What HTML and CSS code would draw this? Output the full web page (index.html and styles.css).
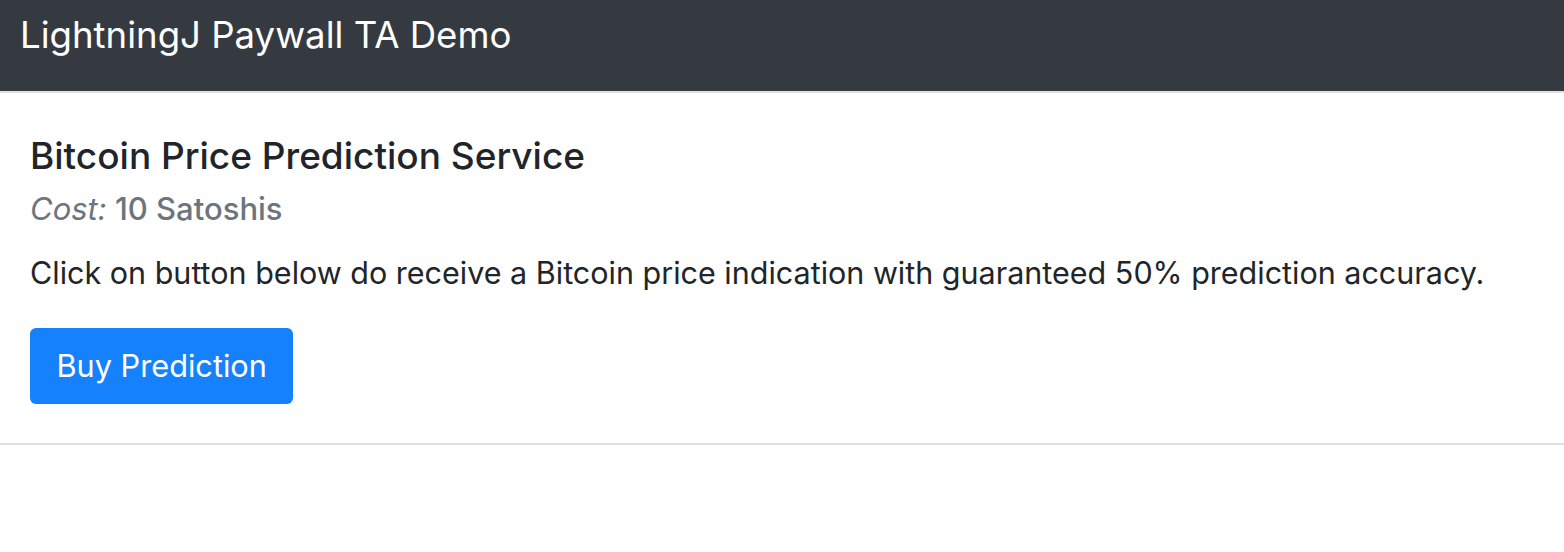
FILE: index.html
```html
<!DOCTYPE html>
<html lang="en">
<head>
<meta charset="utf-8">
<title>LightningJ Paywall TA Demo</title>
<link rel="stylesheet" href="styles.css">
</head>
<body>
<nav class="navbar">
  <span class="brand">LightningJ Paywall TA Demo</span>
</nav>
<div class="card">
  <div class="card-body">
    <h5 class="card-title">Bitcoin Price Prediction Service</h5>
    <h6 class="card-subtitle"><em>Cost:</em> 10 Satoshis</h6>
    <p class="card-text">Click on button below do receive a Bitcoin price indication with guaranteed 50% prediction accuracy.</p>
    <button class="btn">Buy Prediction</button>
  </div>
</div>
</body>
</html>
```

FILE: styles.css
```css
* { box-sizing: border-box; }
html, body { margin: 0; padding: 0; background: #fff; }
body {
  font-family: Inter, "Noto Sans", "Liberation Sans", sans-serif;
  color: #212529;
}
.navbar {
  background: #353a41;
  height: 91px;
  padding: 13px 20px 0;
}
.brand {
  display: block;
  color: #fff;
  font-size: 36.6px;
  line-height: 44px;
  font-weight: 400;
  white-space: nowrap;
}
.card {
  border-top: 2px solid #dfdfdf;
  border-bottom: 2px solid #dfdfdf;
}
.card-body {
  padding: 40.5px 30px 39px;
}
.card-title {
  margin: 0;
  font-size: 37px;
  line-height: 44px;
  font-weight: 500;
}
.card-subtitle {
  margin: 12.7px 0 0;
  font-size: 31px;
  line-height: 37px;
  font-weight: 500;
  color: #6c757d;
}
.card-subtitle em { font-weight: 400; }
.card-text {
  margin: 22.4px 0 0;
  font-size: 30.5px;
  line-height: 45.6px;
  white-space: nowrap;
}
.btn {
  display: block;
  margin-top: 32.8px;
  height: 76px;
  padding: 0 26.5px;
  border: 0;
  border-radius: 6px;
  background: #1681fc;
  color: #fff;
  font-family: inherit;
  font-size: 30.7px;
  line-height: 45.6px;
}
```
